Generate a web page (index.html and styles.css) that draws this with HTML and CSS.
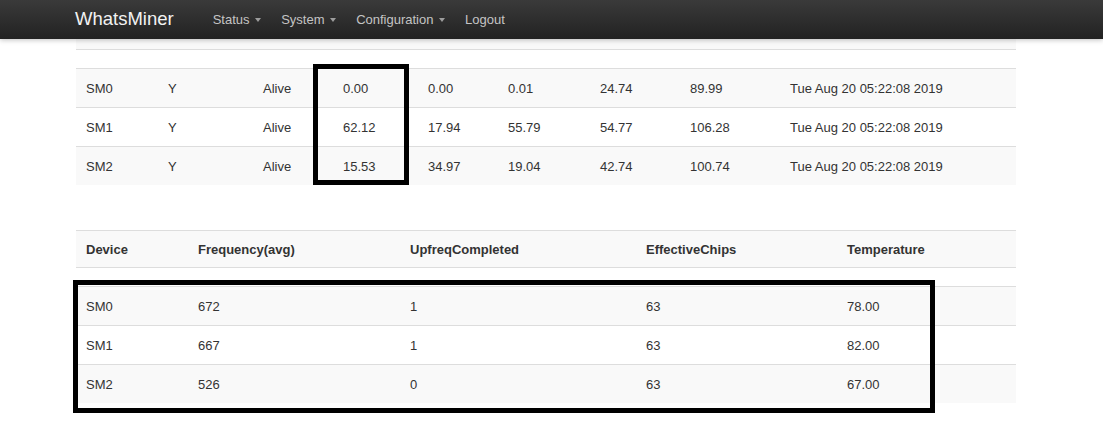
FILE: index.html
```html
<!DOCTYPE html>
<html lang="en">
<head>
  <meta charset="UTF-8">
  <meta name="viewport" content="width=device-width, initial-scale=1.0">
  <title>WhatsMiner Status</title>
  <link rel="stylesheet" href="styles.css">
</head>
<body>
  <!-- Top Navbar -->
  <div class="navbar">
    <a class="brand" href="#">WhatsMiner</a>
    <ul class="nav">
      <li><a href="#">Status <span class="caret"></span></a></li>
      <li><a href="#">System <span class="caret"></span></a></li>
      <li><a href="#">Configuration <span class="caret"></span></a></li>
      <li><a href="#">Logout</a></li>
    </ul>
  </div>

  <div class="container">
    <!-- Hashboard Summary -->
    <div class="table-wrap">
      <table class="table">
        <colgroup>
          <col style="width: 82px">
          <col style="width: 95px">
          <col style="width: 80px">
          <col style="width: 85px">
          <col style="width: 80px">
          <col style="width: 92px">
          <col style="width: 90px">
          <col style="width: 100px">
          <col>
        </colgroup>
        <thead>
          <tr class="head-cut"><th colspan="9"></th></tr>
        </thead>
        <tbody>
          <tr class="spacer"><td colspan="9"></td></tr>
          <tr class="odd">
            <td>SM0</td><td>Y</td><td>Alive</td><td>0.00</td><td>0.00</td><td>0.01</td><td>24.74</td><td>89.99</td><td>Tue Aug 20 05:22:08 2019</td>
          </tr>
          <tr>
            <td>SM1</td><td>Y</td><td>Alive</td><td>62.12</td><td>17.94</td><td>55.79</td><td>54.77</td><td>106.28</td><td>Tue Aug 20 05:22:08 2019</td>
          </tr>
          <tr class="odd">
            <td>SM2</td><td>Y</td><td>Alive</td><td>15.53</td><td>34.97</td><td>19.04</td><td>42.74</td><td>100.74</td><td>Tue Aug 20 05:22:08 2019</td>
          </tr>
        </tbody>
      </table>
      <div class="mark mark-col"></div>
    </div>

    <!-- Device Details -->
    <div class="table-wrap devices">
      <table class="table">
        <colgroup>
          <col style="width: 112px">
          <col style="width: 212px">
          <col style="width: 236px">
          <col style="width: 201px">
          <col>
        </colgroup>
        <thead>
          <tr class="head">
            <th>Device</th><th>Frequency(avg)</th><th>UpfreqCompleted</th><th>EffectiveChips</th><th>Temperature</th>
          </tr>
        </thead>
        <tbody>
          <tr class="spacer"><td colspan="5"></td></tr>
          <tr class="odd"><td>SM0</td><td>672</td><td>1</td><td>63</td><td>78.00</td></tr>
          <tr><td>SM1</td><td>667</td><td>1</td><td>63</td><td>82.00</td></tr>
          <tr class="odd"><td>SM2</td><td>526</td><td>0</td><td>63</td><td>67.00</td></tr>
        </tbody>
      </table>
      <div class="mark mark-rows"></div>
    </div>
  </div>
</body>
</html>
```

FILE: styles.css
```css
body {
  font-family: "Liberation Sans", Arial, sans-serif;
  font-size: 13px;
  color: #333;
  margin: 0;
  padding: 0;
  background-color: #ffffff;
}

/* Navbar */
.navbar {
  height: 39px;
  display: flex;
  align-items: center;
  padding-left: 75px;
  background: linear-gradient(to bottom, #3a3a3a 0, #222 100%);
  box-shadow: 0 1px 5px rgba(0, 0, 0, 0.25);
  position: relative;
  z-index: 2;
}

.brand {
  color: #f2f2f2;
  font-size: 18.5px;
  text-decoration: none;
  margin-right: 29px;
  margin-top: -2px;
}

.nav {
  display: flex;
  list-style: none;
  margin: 0;
  padding: 0;
}

.nav a {
  display: block;
  padding: 0 10px;
  color: #c4c4c4;
  text-decoration: none;
  font-size: 13px;
  margin-top: -1px;
}

.caret {
  display: inline-block;
  width: 0;
  height: 0;
  margin-left: 2px;
  vertical-align: middle;
  border-top: 4px solid #9d9d9d;
  border-left: 3.5px solid transparent;
  border-right: 3.5px solid transparent;
}

/* Content */
.container {
  padding: 0 87px 40px 76px;
}

.table-wrap {
  position: relative;
}

.table-wrap.devices {
  margin-top: 45px;
}

.table {
  width: 100%;
  border-collapse: collapse;
  table-layout: fixed;
}

.table th,
.table td {
  padding: 0 10px;
  text-align: left;
  white-space: nowrap;
}

.table tbody tr td {
  height: 38px;
  border-top: 1px solid #ddd;
}

.table tr.odd td {
  background-color: #f9f9f9;
}

.table tr.spacer td {
  height: 18px;
  background: #fff;
}

.head-cut th {
  height: 10px;
  background-color: #f9f9f9;
}

.head th {
  height: 36px;
  font-weight: bold;
  background-color: #f9f9f9;
  border-top: 1px solid #ddd;
}

/* Highlight boxes */
.mark {
  position: absolute;
  border: 5px solid #000;
}

.mark-col {
  left: 237px;
  top: 25px;
  width: 86px;
  height: 111px;
}

.mark-rows {
  left: -3px;
  top: 50px;
  width: 852px;
  height: 123px;
}
```
